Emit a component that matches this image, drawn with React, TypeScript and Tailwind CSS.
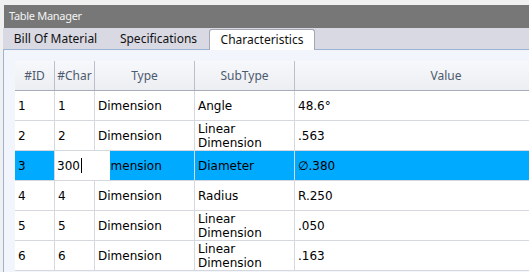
import React from "react";

type Row = { id: string; ch: string; type: string; sub: string[]; value: string; selected?: boolean };

const ROWS: Row[] = [
  { id: "1", ch: "1", type: "Dimension", sub: ["Angle"], value: "48.6°" },
  { id: "2", ch: "2", type: "Dimension", sub: ["Linear", "Dimension"], value: ".563" },
  { id: "3", ch: "3", type: "Dimension", sub: ["Diameter"], value: "∅.380", selected: true },
  { id: "4", ch: "4", type: "Dimension", sub: ["Radius"], value: "R.250" },
  { id: "5", ch: "5", type: "Dimension", sub: ["Linear", "Dimension"], value: ".050" },
  { id: "6", ch: "6", type: "Dimension", sub: ["Linear", "Dimension"], value: ".163" },
];

const UI_FONT = "font-['Noto_Sans',sans-serif]";
const CELL_FONT = "font-['DejaVu_Sans',sans-serif]";

const COLS = [
  { label: "#ID", w: "w-[40px]" },
  { label: "#Char", w: "w-[40px]" },
  { label: "Type", w: "w-[100px]" },
  { label: "SubType", w: "w-[100px]" },
  { label: "Value", w: "w-[302px]" },
];

function Cell({ w, children, last }: { w: string; children: React.ReactNode; last?: boolean }) {
  return (
    <div
      className={`${w} shrink-0 h-full flex flex-col justify-center pl-[3px] leading-[14px] ${
        last ? "" : "border-r border-[#d5d8de]"
      }`}
    >
      {children}
    </div>
  );
}

export default function App() {
  return (
    <div className="w-[529px] h-[272px] bg-[#f0f0f0] pt-[5px] pl-[3px] flex flex-col overflow-hidden">
      {/* title bar */}
      <div
        className={`h-[23px] ml-[1px] bg-[#777777] text-[#f4f4f4] text-[11px] tracking-[-0.3px] ${UI_FONT} flex items-center pl-[5px] shrink-0`}
      >
        Table Manager
      </div>

      {/* tabs */}
      <div className={`h-[21px] bg-[#d9d9e4] flex items-end text-[12px] text-[#111] ${UI_FONT} shrink-0`}>
        <div className="w-[105px] h-[20px] flex items-center justify-center">Bill Of Material</div>
        <div className="w-[101px] h-[20px] flex items-center justify-center">Specifications</div>
        <div className="w-[106px] h-[21px] -mb-px bg-white border border-b-0 border-[#a3a8b2] rounded-t-[3px] flex items-center justify-center relative z-10">
          Characteristics
        </div>
      </div>

      {/* content */}
      <div className="flex-1 bg-[#f2f6fc] border-l border-t border-[#9db3d3] pl-[11px] pt-[11px] overflow-hidden">
        <div className="w-[582px]">
          {/* header */}
          <div
            className={`h-[30px] flex border-b border-[#a6adb9] bg-gradient-to-b from-[#f6f8fb] to-[#eceef2] text-[12px] text-[#4d5a6e] ${UI_FONT}`}
          >
            {COLS.map((c, i) => (
              <div
                key={c.label}
                className={`${c.w} shrink-0 flex items-center justify-center ${
                  i < COLS.length - 1 ? "border-r border-[#b9c0cb]" : ""
                }`}
              >
                {c.label}
              </div>
            ))}
          </div>

          {/* rows */}
          {ROWS.map((r) => (
            <div
              key={r.id}
              className={`relative h-[30px] flex border-b border-[#d5d8de] text-[12px] text-black ${CELL_FONT} ${
                r.selected ? "bg-[#00aaff]" : "bg-white"
              }`}
            >
              <Cell w="w-[40px]">{r.id}</Cell>
              <Cell w="w-[40px]">{r.ch}</Cell>
              <Cell w="w-[100px]">{r.type}</Cell>
              <Cell w="w-[100px]">
                {r.sub.map((s) => (
                  <span key={s}>{s}</span>
                ))}
              </Cell>
              <Cell w="w-[302px]" last>
                {r.value}
              </Cell>
              {r.selected && (
                <div className="absolute left-[40px] top-0 w-[55px] h-[29px] bg-white flex items-center pl-[2px]">
                  300
                  <span className="ml-px w-px h-[15px] bg-black" />
                </div>
              )}
            </div>
          ))}
        </div>
      </div>
    </div>
  );
}
